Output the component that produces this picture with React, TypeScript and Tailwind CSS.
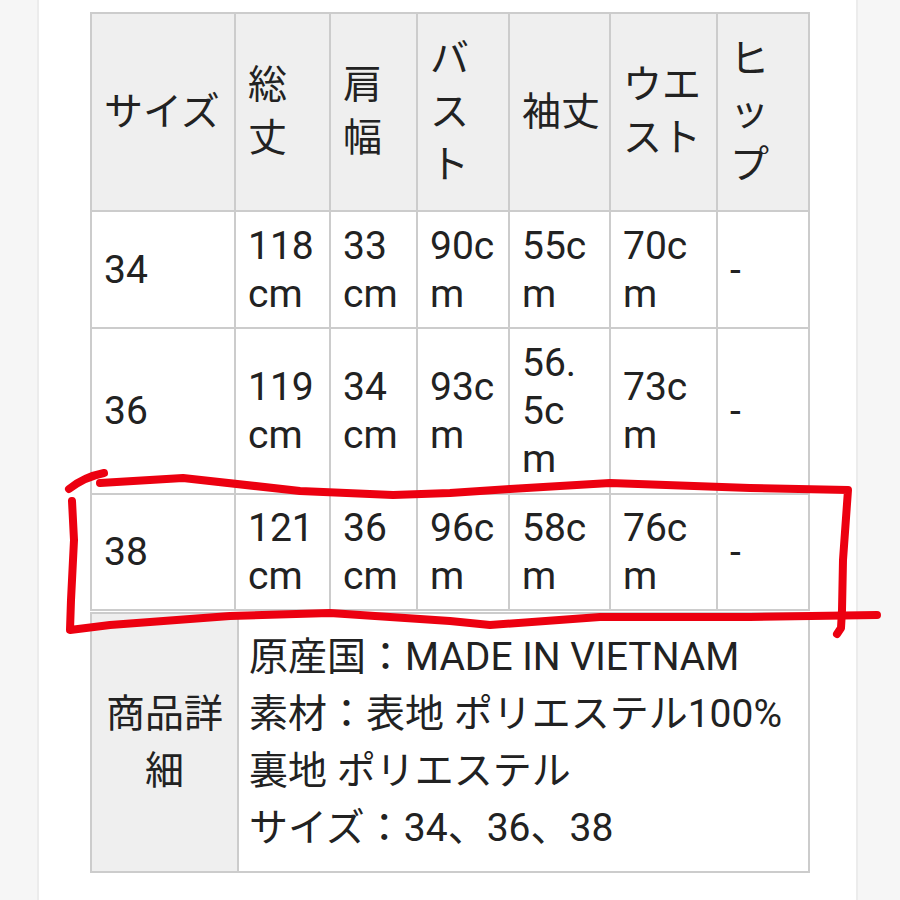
import React from "react";

const font = "font-['Roboto','Noto_Sans_CJK_JP',sans-serif]";

const colWidths = ["w-[144px]", "w-[95px]", "w-[87px]", "w-[92px]", "w-[101px]", "w-[107px]", "w-[92px]"];

const headers: string[][] = [
  ["サイズ"],
  ["総", "丈"],
  ["肩", "幅"],
  ["バ", "ス", "ト"],
  ["袖丈"],
  ["ウエ", "スト"],
  ["ヒ", "ッ", "プ"],
];

const rows: { h: string; cells: string[][] }[] = [
  {
    h: "h-[117px]",
    cells: [["34"], ["118", "cm"], ["33", "cm"], ["90c", "m"], ["55c", "m"], ["70c", "m"], ["-"]],
  },
  {
    h: "h-[166px]",
    cells: [["36"], ["119", "cm"], ["34", "cm"], ["93c", "m"], ["56.", "5c", "m"], ["73c", "m"], ["-"]],
  },
  {
    h: "h-[116px]",
    cells: [["38"], ["121", "cm"], ["36", "cm"], ["96c", "m"], ["58c", "m"], ["76c", "m"], ["-"]],
  },
];

const details = [
  "原産国：MADE IN VIETNAM",
  "素材：表地 ポリエステル100%",
  "裏地 ポリエステル",
  "サイズ：34、36、38",
];

// hand drawn marker around the 38 row
const RedMark = () => (
  <svg
    className="pointer-events-none absolute left-0 top-0"
    width="900"
    height="900"
    viewBox="0 0 900 900"
    fill="none"
  >
    <g stroke="#ec0010" strokeWidth="8" strokeLinecap="round" strokeLinejoin="round">
      <path d="M69 489 Q84 477 104 473" />
      <path d="M100 483 L183 478 L300 491 L393 495 L450 493 L510 489 L610 483 L750 488 L848 490 L843 560 L842 610 L841 628 L837 634" />
      <path d="M72 501 L74 540 L71 600 L70 630 L110 625 L230 616 L330 613 L450 621 L490 625 L600 617 L750 617 L877 615" />
    </g>
  </svg>
);

export default function App() {
  return (
    <div className={`relative flex h-[900px] overflow-hidden bg-[#f6f6f6] text-[#222222] ${font}`}>
      <div className="w-[37px] shrink-0" />
      <div className="w-[821px] shrink-0 border-x-2 border-[#ececec] bg-white pl-[51px] pt-[12px]">
        <table className="w-[718px] table-fixed border-collapse text-[39px]">
          <colgroup>
            {colWidths.map((w, i) => (
              <col key={i} className={w} />
            ))}
          </colgroup>
          <thead>
            <tr className="h-[198px] bg-[#efefef]">
              {headers.map((lines, i) => (
                <th
                  key={i}
                  className="border-2 border-[#cccccc] px-[12px] text-left align-middle font-normal"
                >
                  {lines.map((l) => (
                    <div key={l} className="whitespace-nowrap leading-[53px]">
                      {l}
                    </div>
                  ))}
                </th>
              ))}
            </tr>
          </thead>
          <tbody>
            {rows.map((r, ri) => (
              <tr key={ri} className={r.h}>
                {r.cells.map((lines, ci) => (
                  <td key={ci} className="border-2 border-[#cccccc] px-[12px] align-middle">
                    {lines.map((l) => (
                      <div key={l} className="whitespace-nowrap leading-[48px]">
                        {l}
                      </div>
                    ))}
                  </td>
                ))}
              </tr>
            ))}
          </tbody>
        </table>

        <table className="mt-[1px] w-[718px] table-fixed border-collapse text-[39px]">
          <colgroup>
            <col className="w-[147px]" />
            <col className="w-[571px]" />
          </colgroup>
          <tbody>
            <tr className="h-[259px]">
              <td className="border-2 border-[#cccccc] bg-[#efefef] text-center align-middle">
                <div className="leading-[57px]">商品詳</div>
                <div className="leading-[57px]">細</div>
              </td>
              <td className="border-2 border-[#cccccc] px-[10px] align-middle">
                {details.map((d) => (
                  <div key={d} className="whitespace-nowrap leading-[57px]">
                    {d}
                  </div>
                ))}
              </td>
            </tr>
          </tbody>
        </table>
      </div>
      <div className="flex-1" />
      <RedMark />
    </div>
  );
}
